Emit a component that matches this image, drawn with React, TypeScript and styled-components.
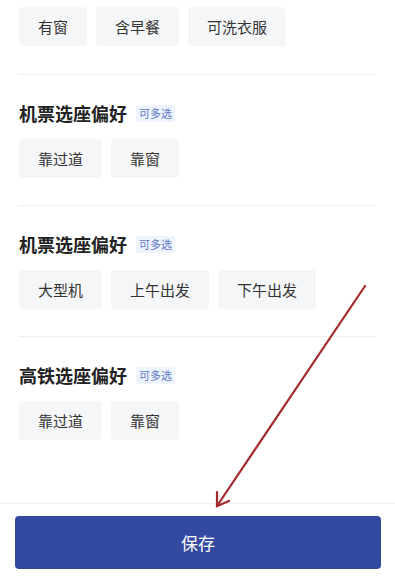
import React from 'react'
import styled, { createGlobalStyle } from 'styled-components'

const GlobalStyle = createGlobalStyle`
    html, body {
        margin: 0;
        padding: 0;
        background: #ffffff;
    }
    body {
        font-family: "Noto Sans CJK SC", "Noto Sans", sans-serif;
    }
`

const StyledPage = styled.div`
    position: relative;
    display: flex;
    flex-direction: column;
    height: 100vh;
    overflow: hidden;
    background-color: white;
`

const StyledContent = styled.div`
    flex: 1;
`

const Section = styled.section<{ $first?: boolean; $last?: boolean }>`
    margin: 0 19px;
    padding: ${(p) => (p.$first ? '7px 0 28px 0' : '26px 0 27px 0')};
    border-bottom: ${(p) => (p.$last ? 'none' : '1px solid #eeeff1')};
`

const SectionHeader = styled.div`
    display: flex;
    align-items: center;
    height: 24px;
    margin-bottom: 14px;
`

const Title = styled.h3`
    margin: 0;
    font-size: 18px;
    font-weight: 700;
    color: #222222;
    line-height: 24px;
`

const Badge = styled.span`
    margin-left: 9px;
    padding: 0 3px;
    height: 17px;
    line-height: 17px;
    font-size: 11px;
    color: #5d79c8;
    background-color: #eef3fc;
    border-radius: 2px;
`

const TagList = styled.div`
    display: flex;
    flex-wrap: wrap;
    gap: 9px;
`

const Tag = styled.div`
    height: 39px;
    line-height: 39px;
    padding: 0 19px;
    font-size: 15px;
    color: #333333;
    background-color: #f5f6f8;
    border-radius: 4px;
`

const Footer = styled.div`
    border-top: 1px solid #eeeeee;
    padding: 12px 14px 11px 15px;
`

const SaveButton = styled.button`
    display: block;
    width: 100%;
    height: 53px;
    border: none;
    border-radius: 4px;
    background-color: #344aa1;
    color: white;
    font-family: "Noto Sans CJK SC", "Noto Sans", sans-serif;
    font-size: 17px;
`

const ArrowOverlay = styled.svg`
    position: absolute;
    left: 0;
    top: 0;
    pointer-events: none;
`

type SectionData = {
    title?: string
    tags: string[]
}

const sections: SectionData[] = [
    { tags: ['有窗', '含早餐', '可洗衣服'] },
    { title: '机票选座偏好', tags: ['靠过道', '靠窗'] },
    { title: '机票选座偏好', tags: ['大型机', '上午出发', '下午出发'] },
    { title: '高铁选座偏好', tags: ['靠过道', '靠窗'] }
]

const App = (): JSX.Element => {
    return (
        <StyledPage>
            <GlobalStyle />
            <StyledContent>
                {sections.map((section, i) => (
                    <Section
                        key={i}
                        $first={i === 0}
                        $last={i === sections.length - 1}>
                        {section.title && (
                            <SectionHeader>
                                <Title>{section.title}</Title>
                                <Badge>可多选</Badge>
                            </SectionHeader>
                        )}
                        <TagList>
                            {section.tags.map((tag) => (
                                <Tag key={tag}>{tag}</Tag>
                            ))}
                        </TagList>
                    </Section>
                ))}
            </StyledContent>
            <Footer>
                <SaveButton type='button'>保存</SaveButton>
            </Footer>
            {/* red annotation arrow over the page */}
            <ArrowOverlay width='395' height='580' viewBox='0 0 395 580'>
                <g stroke='#a3292b' strokeWidth='2.2' strokeLinecap='round' fill='none'>
                    <line x1='365' y1='286' x2='217' y2='506' />
                    <polyline points='217,492 217,506 229,501' />
                </g>
            </ArrowOverlay>
        </StyledPage>
    )
}

export default App
